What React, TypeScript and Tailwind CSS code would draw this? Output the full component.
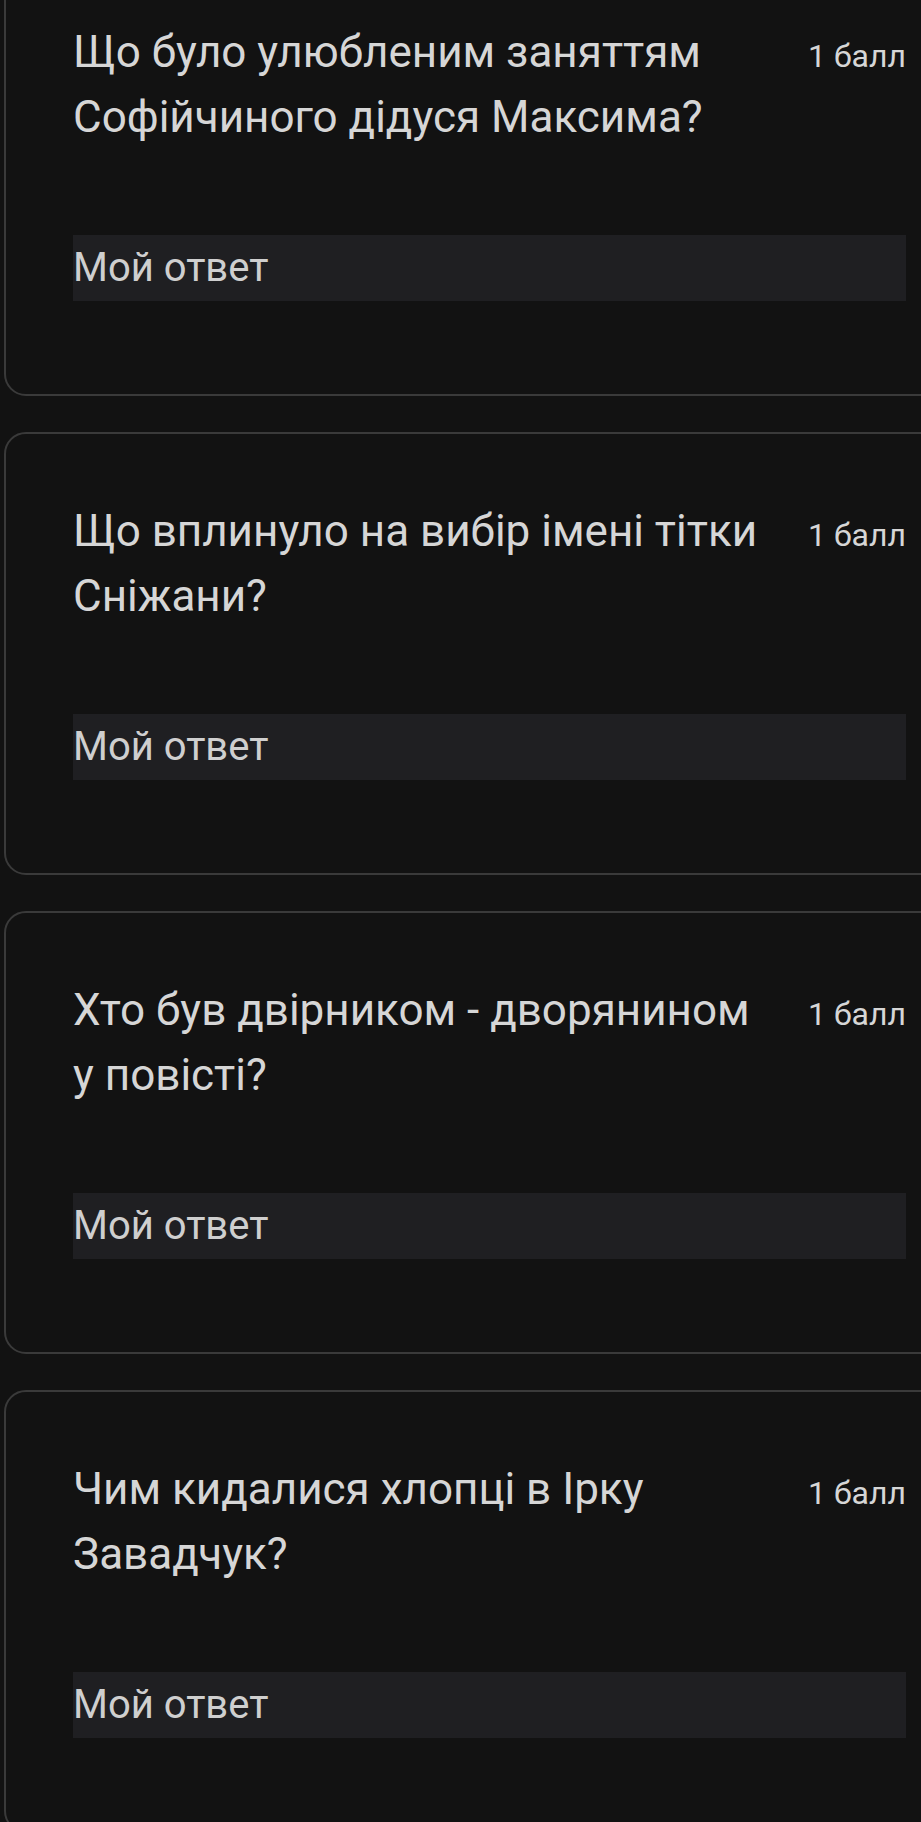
import React from 'react';

type Question = {
  title: string;
  points: string;
};

const questions: Question[] = [
  { title: 'Що було улюбленим заняттям Софійчиного дідуся Максима?', points: '1 балл' },
  { title: 'Що вплинуло на вибір імені тітки Сніжани?', points: '1 балл' },
  { title: 'Хто був двірником - дворянином у повісті?', points: '1 балл' },
  { title: 'Чим кидалися хлопці в Ірку Завадчук?', points: '1 балл' },
];

const QuestionCard: React.FC<{ q: Question; first?: boolean }> = ({ q, first }) => {
  return (
    <div
      className={
        'ml-[4px] mr-[-24px] rounded-[22px] border-2 border-[#3a3a3a] bg-[#121212] pl-[67px] pr-[37px] pt-[65px] pb-[93px] ' +
        (first ? 'mt-[-47px]' : '')
      }
    >
      {/* question + points */}
      <div className="flex items-baseline">
        <div className="flex-1 text-[44px] leading-[65px] text-[#d6d6d6]">{q.title}</div>
        <div className="ml-[32px] shrink-0 text-[32px] text-[#d6d6d6]">{q.points}</div>
      </div>

      {/* answer field */}
      <div className="mt-[85px] flex h-[66px] items-center bg-[#1f1f22] text-[40px] text-[#cfcfcf]">
        Мой ответ
      </div>
    </div>
  );
};

export default function App() {
  return (
    <div
      className="min-h-[1822px] w-full overflow-hidden bg-[#121212]"
      style={{ fontFamily: 'Roboto, "Noto Sans", sans-serif' }}
    >
      <div className="flex flex-col gap-[36px]">
        {questions.map((q, i) => (
          <QuestionCard key={i} q={q} first={i === 0} />
        ))}
      </div>
    </div>
  );
}
